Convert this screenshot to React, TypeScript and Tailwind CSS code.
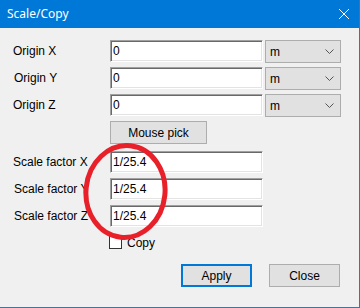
const font = { fontFamily: '"Liberation Sans", Arial, sans-serif' };

function TextBox({ value }: { value: string }) {
  return (
    <div className="w-[153px] h-[22px] bg-white border border-t-[#a0a0a0] border-l-[#a0a0a0] border-b-white border-r-white shadow-[inset_1px_1px_0_#696969,inset_-1px_-1px_0_#e3e3e3] flex items-center pl-[2px] text-[12px] text-black">
      {value}
    </div>
  );
}

function UnitSelect() {
  return (
    <div className="ml-[2px] w-[76px] h-[23px] bg-[#e1e1e1] border border-[#adadad] flex items-center justify-between pl-[4px] pr-[6px] text-[12px] text-black">
      <span>m</span>
      <svg width="9" height="5" viewBox="0 0 9 5" fill="none">
        <path d="M0.5 0.5 L4.5 4.5 L8.5 0.5" stroke="#555" strokeWidth="1" />
      </svg>
    </div>
  );
}

function Row({ label, value, unit, offset }: { label: string; value: string; unit?: boolean; offset?: boolean }) {
  return (
    <div className={unit ? 'flex items-start h-[23px]' : 'flex items-start h-[22px]'}>
      <div className={offset ? 'w-[97px] pl-[1px] h-[22px] flex items-center' : 'w-[97px] h-[22px] flex items-center'}>{label}</div>
      <TextBox value={value} />
      {unit && <UnitSelect />}
    </div>
  );
}

export default function App() {
  return (
    <div className="relative w-[360px] h-[308px] bg-[#f0f0f0] border-r border-b border-[#1a7fd4] text-[12px] text-black overflow-hidden" style={font}>
      <div className="h-[28px] bg-[#0078d7] flex items-center justify-between pl-[7px] pr-[10px] text-white">
        <span className="text-[12px]" style={{ fontFamily: '"Noto Sans", "Open Sans", sans-serif' }}>Scale/Copy</span>
        <svg width="10" height="10" viewBox="0 0 10 10" fill="none">
          <path d="M0 0 L10 10 M10 0 L0 10" stroke="white" strokeWidth="1" />
        </svg>
      </div>
      <div className="pl-[13px] pt-[12px] flex flex-col">
        <div className="flex flex-col gap-[4px]">
          <Row label="Origin X" value="0" unit />
          <Row label="Origin Y" value="0" unit offset />
          <Row label="Origin Z" value="0" unit />
        </div>
        <div className="mt-[4px] ml-[97px] w-[97px] h-[23px] bg-[#e1e1e1] border border-[#adadad] flex items-center justify-center">
          Mouse pick
        </div>
        <div className="mt-[7px] flex flex-col gap-[5px]">
          <Row label="Scale factor X" value="1/25.4" />
          <Row label="Scale factor Y" value="1/25.4" offset />
          <Row label="Scale factor Z" value="1/25.4" offset />
        </div>
        <div className="mt-[9px] ml-[96px] flex items-center h-[13px]">
          <div className="w-[13px] h-[13px] bg-white border border-[#333]" />
          <span className="ml-[5px]">Copy</span>
        </div>
        <div className="mt-[15px] ml-[168px] flex gap-[17px]">
          <div className="w-[71px] h-[23px] bg-[#e1e1e1] border-2 border-[#0078d7] flex items-center justify-center">Apply</div>
          <div className="w-[71px] h-[23px] bg-[#e1e1e1] border border-[#adadad] flex items-center justify-center">Close</div>
        </div>
      </div>
      <svg className="absolute left-[82px] top-[142px]" width="88" height="100" viewBox="0 0 88 100" fill="none">
        <ellipse cx="43.5" cy="49.5" rx="39.5" ry="46" stroke="#e8202a" strokeWidth="5" transform="rotate(6 43.5 49.5)" />
      </svg>
    </div>
  );
}
